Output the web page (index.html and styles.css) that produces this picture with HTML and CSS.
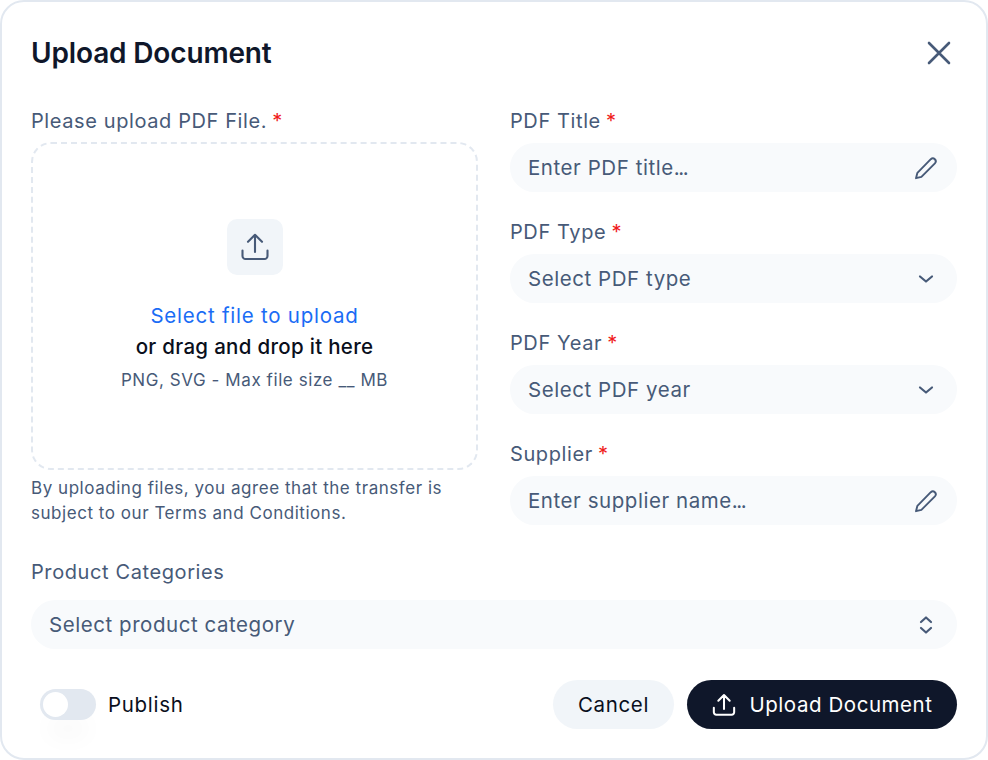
FILE: index.html
```html
<!DOCTYPE html>
<html lang="en">
<head>
<meta charset="utf-8">
<title>Upload Document</title>
<link rel="stylesheet" href="styles.css">
</head>
<body>
<div class="dialog">
  <header class="head">
    <h1 class="title">Upload Document</h1>
    <svg class="close" width="32" height="32" viewBox="0 0 32 32" fill="none" stroke="#475a78" stroke-width="2.6" stroke-linecap="round"><path d="M6 6 26 26M26 6 6 26"/></svg>
  </header>
  <div class="cols">
    <section class="left">
      <div class="label label-tight">Please upload PDF File. <span class="req">*</span></div>
      <div class="drop">
        <div class="drop-icon">
          <svg width="32" height="32" viewBox="0 0 32 32" fill="none" stroke="#475a78" stroke-width="2.100" stroke-linecap="round" stroke-linejoin="round"><path d="M16 21V3.800M9 10.800 16 3.800 23 10.800M3.500 19.500V25a3 3 0 0 0 3 3h19a3 3 0 0 0 3-3v-5.500"/></svg>
        </div>
        <div class="drop-link">Select file to upload</div>
        <div class="drop-main">or drag and drop it here</div>
        <div class="drop-note">PNG, SVG - Max file size __ MB</div>
      </div>
      <p class="hint">By uploading files, you agree that the transfer is<br>subject to our Terms and Conditions.</p>
    </section>
    <section class="right">
      <div class="field">
        <div class="label">PDF Title <span class="req">*</span></div>
        <div class="input"><span>Enter PDF title<span class="dots">...</span></span>
          <svg class="pencil" width="26" height="26" viewBox="0 0 26 26" fill="none" stroke="#475a78" stroke-width="1.9" stroke-linecap="round" stroke-linejoin="round"><path d="M3 23.200 4.400 17.800 17.800 4.200a2.900 2.900 0 0 1 4.100 4.100L8.400 21.800Z"/></svg>
        </div>
      </div>
      <div class="field">
        <div class="label">PDF Type <span class="req">*</span></div>
        <div class="input"><span>Select PDF type</span>
          <svg class="chev" width="26" height="26" viewBox="0 0 26 26" fill="none" stroke="#475a78" stroke-width="2.2" stroke-linecap="round" stroke-linejoin="round"><path d="M7 10.500 13 15.500 19 10.500"/></svg>
        </div>
      </div>
      <div class="field">
        <div class="label">PDF Year <span class="req">*</span></div>
        <div class="input"><span>Select PDF year</span>
          <svg class="chev" width="26" height="26" viewBox="0 0 26 26" fill="none" stroke="#475a78" stroke-width="2.2" stroke-linecap="round" stroke-linejoin="round"><path d="M7 10.500 13 15.500 19 10.500"/></svg>
        </div>
      </div>
      <div class="field field-last">
        <div class="label">Supplier <span class="req">*</span></div>
        <div class="input"><span>Enter supplier name<span class="dots">...</span></span>
          <svg class="pencil" width="26" height="26" viewBox="0 0 26 26" fill="none" stroke="#475a78" stroke-width="1.9" stroke-linecap="round" stroke-linejoin="round"><path d="M3 23.200 4.400 17.800 17.800 4.200a2.900 2.900 0 0 1 4.100 4.100L8.400 21.800Z"/></svg>
        </div>
      </div>
    </section>
  </div>
  <section class="cats">
    <div class="label">Product Categories</div>
    <div class="input"><span>Select product category</span>
      <svg class="chev" width="26" height="26" viewBox="0 0 26 26" fill="none" stroke="#475a78" stroke-width="2.2" stroke-linecap="round" stroke-linejoin="round"><path d="M8 10 13 5.500 18 10M8 16 13 20.500 18 16"/></svg>
    </div>
  </section>
  <footer class="foot">
    <div class="publish">
      <div class="toggle"><div class="knob"></div></div>
      <span>Publish</span>
    </div>
    <div class="actions">
      <button class="btn cancel">Cancel</button>
      <button class="btn primary">
        <svg width="26" height="26" viewBox="0 0 32 32" fill="none" stroke="#fff" stroke-width="2.500" stroke-linecap="round" stroke-linejoin="round"><path d="M16 21V3.800M9 10.800 16 3.800 23 10.800M3.500 19.500V25a3 3 0 0 0 3 3h19a3 3 0 0 0 3-3v-5.500"/></svg>
        Upload Document
      </button>
    </div>
  </footer>
</div>
</body>
</html>
```

FILE: styles.css
```css
* { box-sizing: border-box; }
html, body { margin: 0; background: #fff; }
body { width: 988px; height: 760px; overflow: hidden; font-family: Inter, "Liberation Sans", sans-serif; }
.dialog {
  width: 988px; height: 760px;
  border: 2px solid #e2e8f0;
  border-radius: 24px;
  background: #fff;
  padding: 0 29px;
  color: #0f172a;
}
.head { display: flex; justify-content: space-between; align-items: center; height: 102px; }
.title { margin: 0; font-size: 28px; font-weight: 600; letter-spacing: -0.15px; color: #0f172a; }
.close { margin-right: 2px; }
.cols { display: flex; gap: 32px; }
.left, .right { width: 447px; flex: none; }
.label { font-size: 20px; line-height: 34px; height: 39px; color: #475a78; letter-spacing: 0.6px; }
.label-tight { height: 38px; }
.req { color: #f01b1b; margin-left: -1px; }
.drop {
  height: 328px;
  border: 2px dashed #e2e8f0;
  border-radius: 20px;
  display: flex; flex-direction: column; align-items: center;
  padding-top: 75px;
}
.drop-icon { width: 56px; height: 56px; border-radius: 10px; background: #f1f5f9; display: flex; align-items: center; justify-content: center; }
.drop-link { margin-top: 25px; font-size: 20.500px; line-height: 31px; color: #1a6cf5; letter-spacing: 0.76px; }
.drop-main { font-size: 20.500px; line-height: 31px; color: #0a0f1c; font-weight: 500; letter-spacing: 0.3px; }
.drop-note { margin-top: 3px; font-size: 17px; line-height: 31px; color: #475a78; letter-spacing: 0.57px; }
.hint { margin: 6px 0 0; font-size: 17px; line-height: 25px; color: #475a78; letter-spacing: 0.54px; }
.field { height: 111px; }
.field-last { height: 88px; }
.input {
  height: 49px; border-radius: 25px; background: #f8fafc;
  display: flex; align-items: center; justify-content: space-between;
  padding: 0 18px;
  font-size: 20.500px; color: #475a78; letter-spacing: 0.55px;
}
.dots { letter-spacing: -1.4px; }
.cats { margin-top: 29px; }
.cats .label { height: 45px; }
.foot { display: flex; justify-content: space-between; align-items: center; margin-top: 31px; }
.publish { display: flex; align-items: center; gap: 12px; padding-left: 9px; font-size: 20.500px; color: #0a0f1c; letter-spacing: 0.7px; }
.toggle { width: 56px; height: 31px; border-radius: 16px; background: #e2e8f0; padding: 3px; box-shadow: 0 24px 24px -8px rgba(15,23,42,0.04); }
.knob { width: 25px; height: 25px; border-radius: 50%; background: #fff; }
.actions { display: flex; gap: 13px; }
.btn { height: 49px; border: 0; border-radius: 25px; font: inherit; font-size: 20.500px; display: flex; align-items: center; }
.cancel { width: 121px; justify-content: center; background: #f1f5f9; color: #0a0f1c; letter-spacing: 0.67px; }
.primary { width: 270px; justify-content: center; gap: 12px; background: #0f172a; color: #fff; letter-spacing: 0.56px; }
```
